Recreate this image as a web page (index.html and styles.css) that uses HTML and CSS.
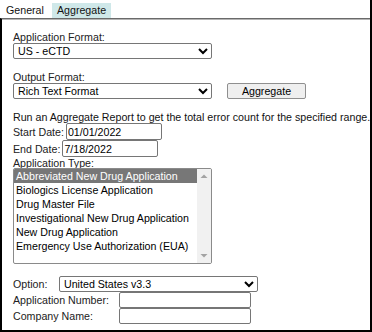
FILE: index.html
```html
<!DOCTYPE html>
<html lang="en">
<head>
<meta charset="utf-8">
<title>Aggregate</title>
<link rel="stylesheet" href="styles.css">
</head>
<body>
<div class="frame">
  <div class="tabs">
    <span class="tab">General</span>
    <span class="tab tab-active">Aggregate</span>
  </div>
  <div class="panel">
    <div class="field">
      <label class="lbl">Application Format:</label>
      <select class="sel"><option>US - eCTD</option></select>
    </div>
    <div class="field field-gap">
      <label class="lbl">Output Format:</label>
      <div class="ctrl-row">
        <select class="sel"><option>Rich Text Format</option></select>
        <button class="btn" type="button">Aggregate</button>
      </div>
    </div>
    <p class="note">Run an Aggregate Report to get the total error count for the specified range.</p>
    <div class="date-row">
      <label class="lbl">Start Date:</label>
      <input class="txt txt-date" type="text" value="01/01/2022">
    </div>
    <div class="date-row">
      <label class="lbl">End Date:</label>
      <input class="txt txt-date" type="text" value="7/18/2022">
    </div>
    <label class="lbl lbl-type">Application Type:</label>
    <div class="listbox" role="listbox">
      <div class="items">
        <div class="item item-selected">Abbreviated New Drug Application</div>
        <div class="item">Biologics License Application</div>
        <div class="item">Drug Master File</div>
        <div class="item">Investigational New Drug Application</div>
        <div class="item">New Drug Application</div>
        <div class="item">Emergency Use Authorization (EUA)</div>
      </div>
      <div class="scrollbar">
        <svg class="arrow" width="14" height="14" viewBox="0 0 14 14"><path d="M3.5 9 L7 5.5 L10.5 9 Z" fill="#a3a3a3"/></svg>
        <svg class="arrow" width="14" height="14" viewBox="0 0 14 14"><path d="M3.5 5 L7 8.5 L10.5 5 Z" fill="#a3a3a3"/></svg>
      </div>
    </div>
    <div class="opt-row">
      <label class="lbl">Option:</label>
      <select class="sel"><option>United States v3.3</option></select>
    </div>
    <div class="grid">
      <label class="lbl">Application Number:</label>
      <input class="txt txt-wide" type="text">
      <label class="lbl">Company Name:</label>
      <input class="txt txt-wide" type="text">
    </div>
  </div>
</div>
</body>
</html>
```
FILE: styles.css
```css
html, body {
  margin: 0;
  padding: 0;
  background: #fff;
}
body {
  font-family: "Liberation Sans", Arial, sans-serif;
  font-size: 10.67px;
  color: #222;
}
.frame {
  width: 372px;
  height: 332px;
  box-sizing: border-box;
  border-right: 2px solid #000;
  border-bottom: 2px solid #000;
  display: flex;
  flex-direction: column;
}
.tabs {
  height: 18px;
  box-sizing: border-box;
  padding: 3px 0 0 1px;
  display: flex;
  gap: 3px;
}
.tab {
  padding: 0 5px;
  line-height: 15px;
  height: 15px;
  color: #111;
}
.tab-active {
  background: #cfe8e9;
}
.panel {
  flex: 1;
  border-top: 1px solid #6a6a6a;
  box-shadow: inset 0 1px 0 #b4b4b4;
  border-left: 2px solid #000;
  padding: 12px 0 0 11px;
  display: flex;
  flex-direction: column;
  align-items: flex-start;
}
.lbl {
  display: block;
  line-height: 12px;
  white-space: nowrap;
}
.field {
  display: flex;
  flex-direction: column;
  align-items: flex-start;
}
.field-gap {
  margin-top: 12px;
}
.sel {
  font-family: "Liberation Sans", Arial, sans-serif;
  font-size: 10.67px;
  color: #000;
  width: 199px;
  height: 16px;
  box-sizing: border-box;
  padding: 0;
  margin: 0;
  background: #fff;
  border: 1px solid #767676;
  border-radius: 2px;
}
.ctrl-row {
  display: flex;
  align-items: center;
}
.btn {
  font-family: "Liberation Sans", Arial, sans-serif;
  font-size: 10.67px;
  color: #000;
  width: 79px;
  height: 16px;
  box-sizing: border-box;
  margin: 0 0 0 15px;
  padding: 0;
  background: #efefef;
  border: 1px solid #8f8f8f;
  border-radius: 2px;
}
.note {
  margin: 12px 0 0 0;
  line-height: 12px;
  white-space: nowrap;
  color: #111;
}
.date-row {
  display: flex;
  align-items: center;
  height: 17px;
}
.txt {
  font-family: "Liberation Sans", Arial, sans-serif;
  font-size: 10.67px;
  color: #000;
  box-sizing: border-box;
  margin: 0;
  padding: 0 1px;
  border: 1px solid #767676;
  border-radius: 2px;
  background: #fff;
  outline: none;
}
.txt-date {
  width: 96px;
  height: 17px;
  margin-left: 2px;
}
.lbl-type {
  line-height: 11px;
  margin: 1px 0 -1px 0;
}
.listbox {
  width: 199px;
  height: 96px;
  box-sizing: border-box;
  border: 1px solid #8a8a8a;
  border-radius: 2px;
  display: flex;
  background: #fff;
  overflow: hidden;
}
.items {
  flex: 1;
  color: #000;
}
.item {
  height: 14px;
  line-height: 14px;
  padding-left: 2px;
  white-space: nowrap;
}
.item-selected {
  background: #777;
  color: #fff;
}
.scrollbar {
  width: 14px;
  background: #f1f1f1;
  display: flex;
  flex-direction: column;
  justify-content: space-between;
}
.arrow {
  display: block;
}
.opt-row {
  display: flex;
  align-items: center;
  height: 16px;
  margin-top: 12px;
}
.opt-row .sel {
  margin-left: 12px;
}
.opt-row .lbl {
  width: 34px;
}
.grid {
  display: grid;
  grid-template-columns: 106px 132px;
  grid-auto-rows: 16px;
  align-items: center;
}
.txt-wide {
  width: 132px;
  height: 16px;
}
```
